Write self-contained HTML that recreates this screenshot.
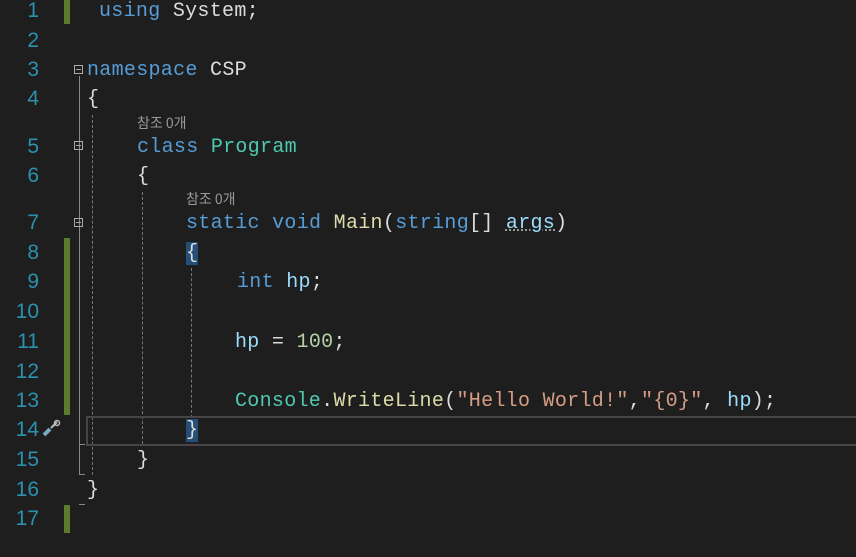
<!DOCTYPE html>
<html><head><meta charset="utf-8"><style>
body{margin:0;width:856px;height:557px;background:#1e1e1e;overflow:hidden;position:relative;font-family:"Liberation Mono","Noto Sans CJK KR",monospace;}
.l{position:absolute;font-size:20px;letter-spacing:0.3px;white-space:pre;color:#dcdcdc;line-height:24px;margin-top:2px;}
.n{position:absolute;left:0;width:39px;text-align:right;color:#2b91af;font-size:21px;line-height:24px;font-family:"Liberation Sans",sans-serif;margin-top:1px}
.cl{position:absolute;font-size:14px;color:#999;font-family:"Noto Sans CJK KR",sans-serif;line-height:16px;}
.k{color:#569cd6}.t{color:#4ec9b0}.s{color:#d69d85}.m{color:#dcdcaa}.v{color:#9cdcfe}.num{color:#b5cea8}
.g{position:absolute;left:64px;width:6px;background:#5b7c2e}
.f{position:absolute;left:74px;width:9px;height:9px;border:1px solid #aaa;box-sizing:border-box}
.f:after{content:"";position:absolute;left:1px;right:1px;top:3px;height:1px;background:#aaa}
.dl{position:absolute;width:0;border-left:1px dashed #777}
.hb{background:#264f78}
</style></head><body>
<div class="g" style="top:0;height:24px"></div>
<div class="g" style="top:238px;height:177px"></div>
<div class="g" style="top:505px;height:28px"></div>
<div style="position:absolute;left:79px;top:76px;width:1px;height:200px;border-left:1px solid #888"></div>
<div style="position:absolute;left:79px;top:276px;width:1px;height:198px;border-left:1px solid #888"></div>
<div style="position:absolute;left:79px;top:444px;width:6px;height:1px;background:#888"></div>
<div style="position:absolute;left:79px;top:474px;width:6px;height:1px;background:#888"></div>
<div style="position:absolute;left:79px;top:504px;width:6px;height:1px;background:#888"></div>
<div class="f" style="top:65px"></div>
<div class="f" style="top:141px"></div>
<div class="f" style="top:218px"></div>
<div class="dl" style="left:92px;top:115px;height:360px"></div>
<div class="dl" style="left:142px;top:192px;height:252px"></div>
<div class="dl" style="left:191px;top:268px;height:150px"></div>
<div style="position:absolute;left:86px;top:416px;width:780px;height:26px;border:2px solid #464646"></div>

<div class="n" style="top:-2px">1</div>
<div class="n" style="top:28px">2</div>
<div class="n" style="top:57px">3</div>
<div class="n" style="top:86px">4</div>
<div class="n" style="top:134px">5</div>
<div class="n" style="top:163px">6</div>
<div class="n" style="top:210px">7</div>
<div class="n" style="top:240px">8</div>
<div class="n" style="top:269px">9</div>
<div class="n" style="top:299px">10</div>
<div class="n" style="top:329px">11</div>
<div class="n" style="top:359px">12</div>
<div class="n" style="top:388px">13</div>
<div class="n" style="top:417px">14</div>
<div class="n" style="top:447px">15</div>
<div class="n" style="top:477px">16</div>
<div class="n" style="top:506px">17</div>
<svg style="position:absolute;left:40px;top:418px" width="22" height="22" viewBox="0 0 22 22"><path d="M4 17 L10 11" stroke="#7ab" stroke-width="4"/><path d="M11 10 L17 4" stroke="#bbb" stroke-width="2"/><circle cx="17" cy="5" r="2.5" fill="none" stroke="#bbb" stroke-width="1.5"/></svg>

<div class="l" style="left:99px;top:-2px"><span class="k">using</span> System;</div>
<div class="l" style="left:87px;top:57px"><span class="k">namespace</span> CSP</div>
<div class="l" style="left:87px;top:86px">{</div>
<div class="cl" style="left:137px;top:115px">참조 0개</div>
<div class="l" style="left:137px;top:134px"><span class="k">class</span> <span class="t">Program</span></div>
<div class="l" style="left:137px;top:163px">{</div>
<div class="cl" style="left:186px;top:191px">참조 0개</div>
<div class="l" style="left:186px;top:210px"><span class="k">static</span> <span class="k">void</span> <span class="m">Main</span>(<span class="k">string</span>[] <span class="v" style="text-decoration:underline dotted #999">args</span>)</div>
<div class="l" style="left:186px;top:240px"><span class="hb">{</span></div>
<div class="l" style="left:237px;top:269px"><span class="k">int</span> <span class="v">hp</span>;</div>
<div class="l" style="left:235px;top:329px"><span class="v">hp</span> = <span class="num">100</span>;</div>
<div class="l" style="left:235px;top:388px"><span class="t">Console</span>.<span class="m">WriteLine</span>(<span class="s">"Hello World!"</span>,<span class="s">"{0}"</span>, <span class="v">hp</span>);</div>
<div class="l" style="left:186px;top:417px"><span class="hb">}</span></div>
<div class="l" style="left:137px;top:447px">}</div>
<div class="l" style="left:87px;top:477px">}</div>
</body></html>
